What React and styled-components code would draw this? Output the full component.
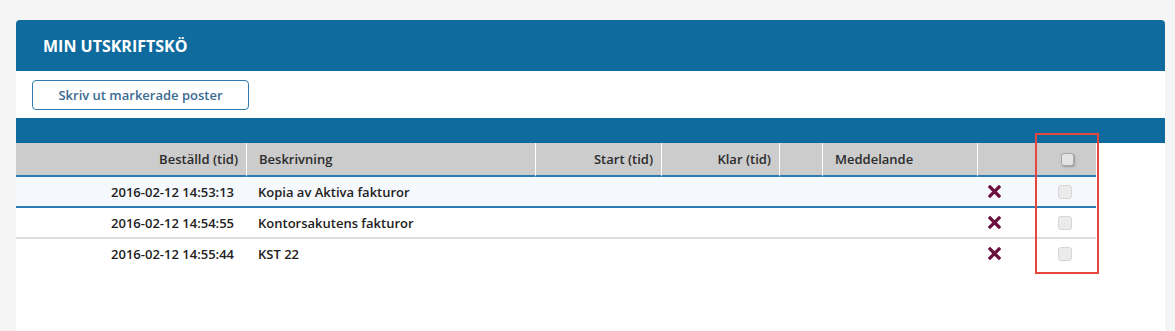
import React from 'react';
import styled, { createGlobalStyle } from 'styled-components';

const GlobalStyle = createGlobalStyle`
  html, body {
    margin: 0;
    padding: 0;
    background: #f5f5f5;
    font-family: "Open Sans", "Liberation Sans", sans-serif;
  }
`;

const Page = styled.div`
  min-height: 100vh;
  box-sizing: border-box;
  padding: 20px 10px 0 16px;
  display: flex;
  flex-direction: column;
`;

const Panel = styled.div`
  position: relative;
  flex: 1;
  background: #ffffff;
  border-radius: 4px 4px 0 0;
  display: flex;
  flex-direction: column;
`;

const PanelHeader = styled.div`
  height: 51px;
  background: #0f6b9e;
  border-radius: 4px 4px 0 0;
  display: flex;
  align-items: center;
  padding: 0 27px;
`;

const PanelTitle = styled.h2`
  margin: 0;
  color: #ffffff;
  font-size: 16px;
  font-weight: 700;
`;

const Toolbar = styled.div`
  height: 47px;
  display: flex;
  align-items: center;
  padding: 0 16px;
`;

const Button = styled.button`
  width: 217px;
  height: 30px;
  margin-top: 1px;
  background: #ffffff;
  border: 1px solid #2f7db3;
  border-radius: 4px;
  color: #3a6b92;
  font-family: inherit;
  font-size: 13px;
  font-weight: 600;
  cursor: pointer;
`;

const BlueBar = styled.div`
  height: 25px;
  background: #0f6b9e;
`;

const Table = styled.table`
  width: 1080px;
  border-collapse: separate;
  border-spacing: 0;
  table-layout: fixed;
  font-size: 13px;
`;

const Th = styled.th`
  height: 32px;
  padding: 0 ${p => (p.align === 'right' ? '8px' : '12px')};
  background: #cccccc;
  color: #2b2b2b;
  font-weight: 600;
  text-align: ${p => p.align || 'left'};
  border-bottom: 2px solid #2a7db7;
  & + & {
    border-left: 1px solid #ffffff;
  }
`;

const Tr = styled.tr`
  background: ${p => (p.highlight ? '#f5f8fd' : '#ffffff')};
`;

const Td = styled.td`
  height: 29px;
  padding: 0 12px;
  color: #222222;
  font-weight: 600;
  text-align: ${p => p.align || 'left'};
  border-bottom: ${p =>
    p.border === 'blue' ? '2px solid #2a7db7' : p.border === 'gray' ? '2px solid #dddddd' : 'none'};
  vertical-align: middle;
  white-space: nowrap;
`;

const CenterCell = styled.div`
  display: flex;
  justify-content: center;
  align-items: center;
`;

const Check = styled.span`
  display: inline-block;
  box-sizing: border-box;
  width: ${p => (p.head ? '13px' : '14px')};
  height: ${p => (p.head ? '13px' : '14px')};
  border-radius: 3px;
  background: ${p => (p.head ? '#e4e4e4' : '#ebebec')};
  border: 1px solid ${p => (p.head ? '#a9a9a9' : '#d6d6d6')};
  box-shadow: ${p => (p.head ? '1px 1px 2px rgba(0,0,0,0.25)' : 'none')};
  margin-left: ${p => (p.head ? '3px' : '-2px')};
`;

const DeleteIcon = styled.svg`
  display: block;
  margin-left: -1px;
`;

const Highlight = styled.div`
  position: absolute;
  left: 1019px;
  top: 113px;
  width: 64px;
  height: 141px;
  box-sizing: border-box;
  border: 2px solid #e5473f;
  pointer-events: none;
`;

const rows = [
  { id: 1, ordered: '2016-02-12 14:53:13', desc: 'Kopia av Aktiva fakturor', border: 'blue', highlight: true },
  { id: 2, ordered: '2016-02-12 14:54:55', desc: 'Kontorsakutens fakturor', border: 'gray' },
  { id: 3, ordered: '2016-02-12 14:55:44', desc: 'KST 22', border: 'none' },
];

const Cross = () => (
  <DeleteIcon width="13" height="13" viewBox="0 0 13 13">
    <path d="M2 2 L11 11 M11 2 L2 11" stroke="#6b1140" strokeWidth="3.2" strokeLinecap="square" />
  </DeleteIcon>
);

export default function App() {
  return (
    <>
      <GlobalStyle />
      <Page>
        <Panel>
          <PanelHeader>
            <PanelTitle>MIN UTSKRIFTSKÖ</PanelTitle>
          </PanelHeader>
          <Toolbar>
            <Button>Skriv ut markerade poster</Button>
          </Toolbar>
          <BlueBar />
          <Table>
            <colgroup>
              <col style={{ width: 230 }} />
              <col style={{ width: 289 }} />
              <col style={{ width: 126 }} />
              <col style={{ width: 118 }} />
              <col style={{ width: 43 }} />
              <col style={{ width: 155 }} />
              <col style={{ width: 58 }} />
              <col style={{ width: 61 }} />
            </colgroup>
            <thead>
              <tr>
                <Th align="right">Beställd (tid)</Th>
                <Th>Beskrivning</Th>
                <Th align="right">Start (tid)</Th>
                <Th align="right">Klar (tid)</Th>
                <Th />
                <Th>Meddelande</Th>
                <Th />
                <Th>
                  <CenterCell>
                    <Check head />
                  </CenterCell>
                </Th>
              </tr>
            </thead>
            <tbody>
              {rows.map(row => (
                <Tr key={row.id} highlight={row.highlight}>
                  <Td align="right" border={row.border}>{row.ordered}</Td>
                  <Td border={row.border}>{row.desc}</Td>
                  <Td border={row.border} />
                  <Td border={row.border} />
                  <Td border={row.border} />
                  <Td border={row.border} />
                  <Td border={row.border}>
                    <Cross />
                  </Td>
                  <Td border={row.border}>
                    <CenterCell>
                      <Check />
                    </CenterCell>
                  </Td>
                </Tr>
              ))}
            </tbody>
          </Table>
          <Highlight />
        </Panel>
      </Page>
    </>
  );
}
